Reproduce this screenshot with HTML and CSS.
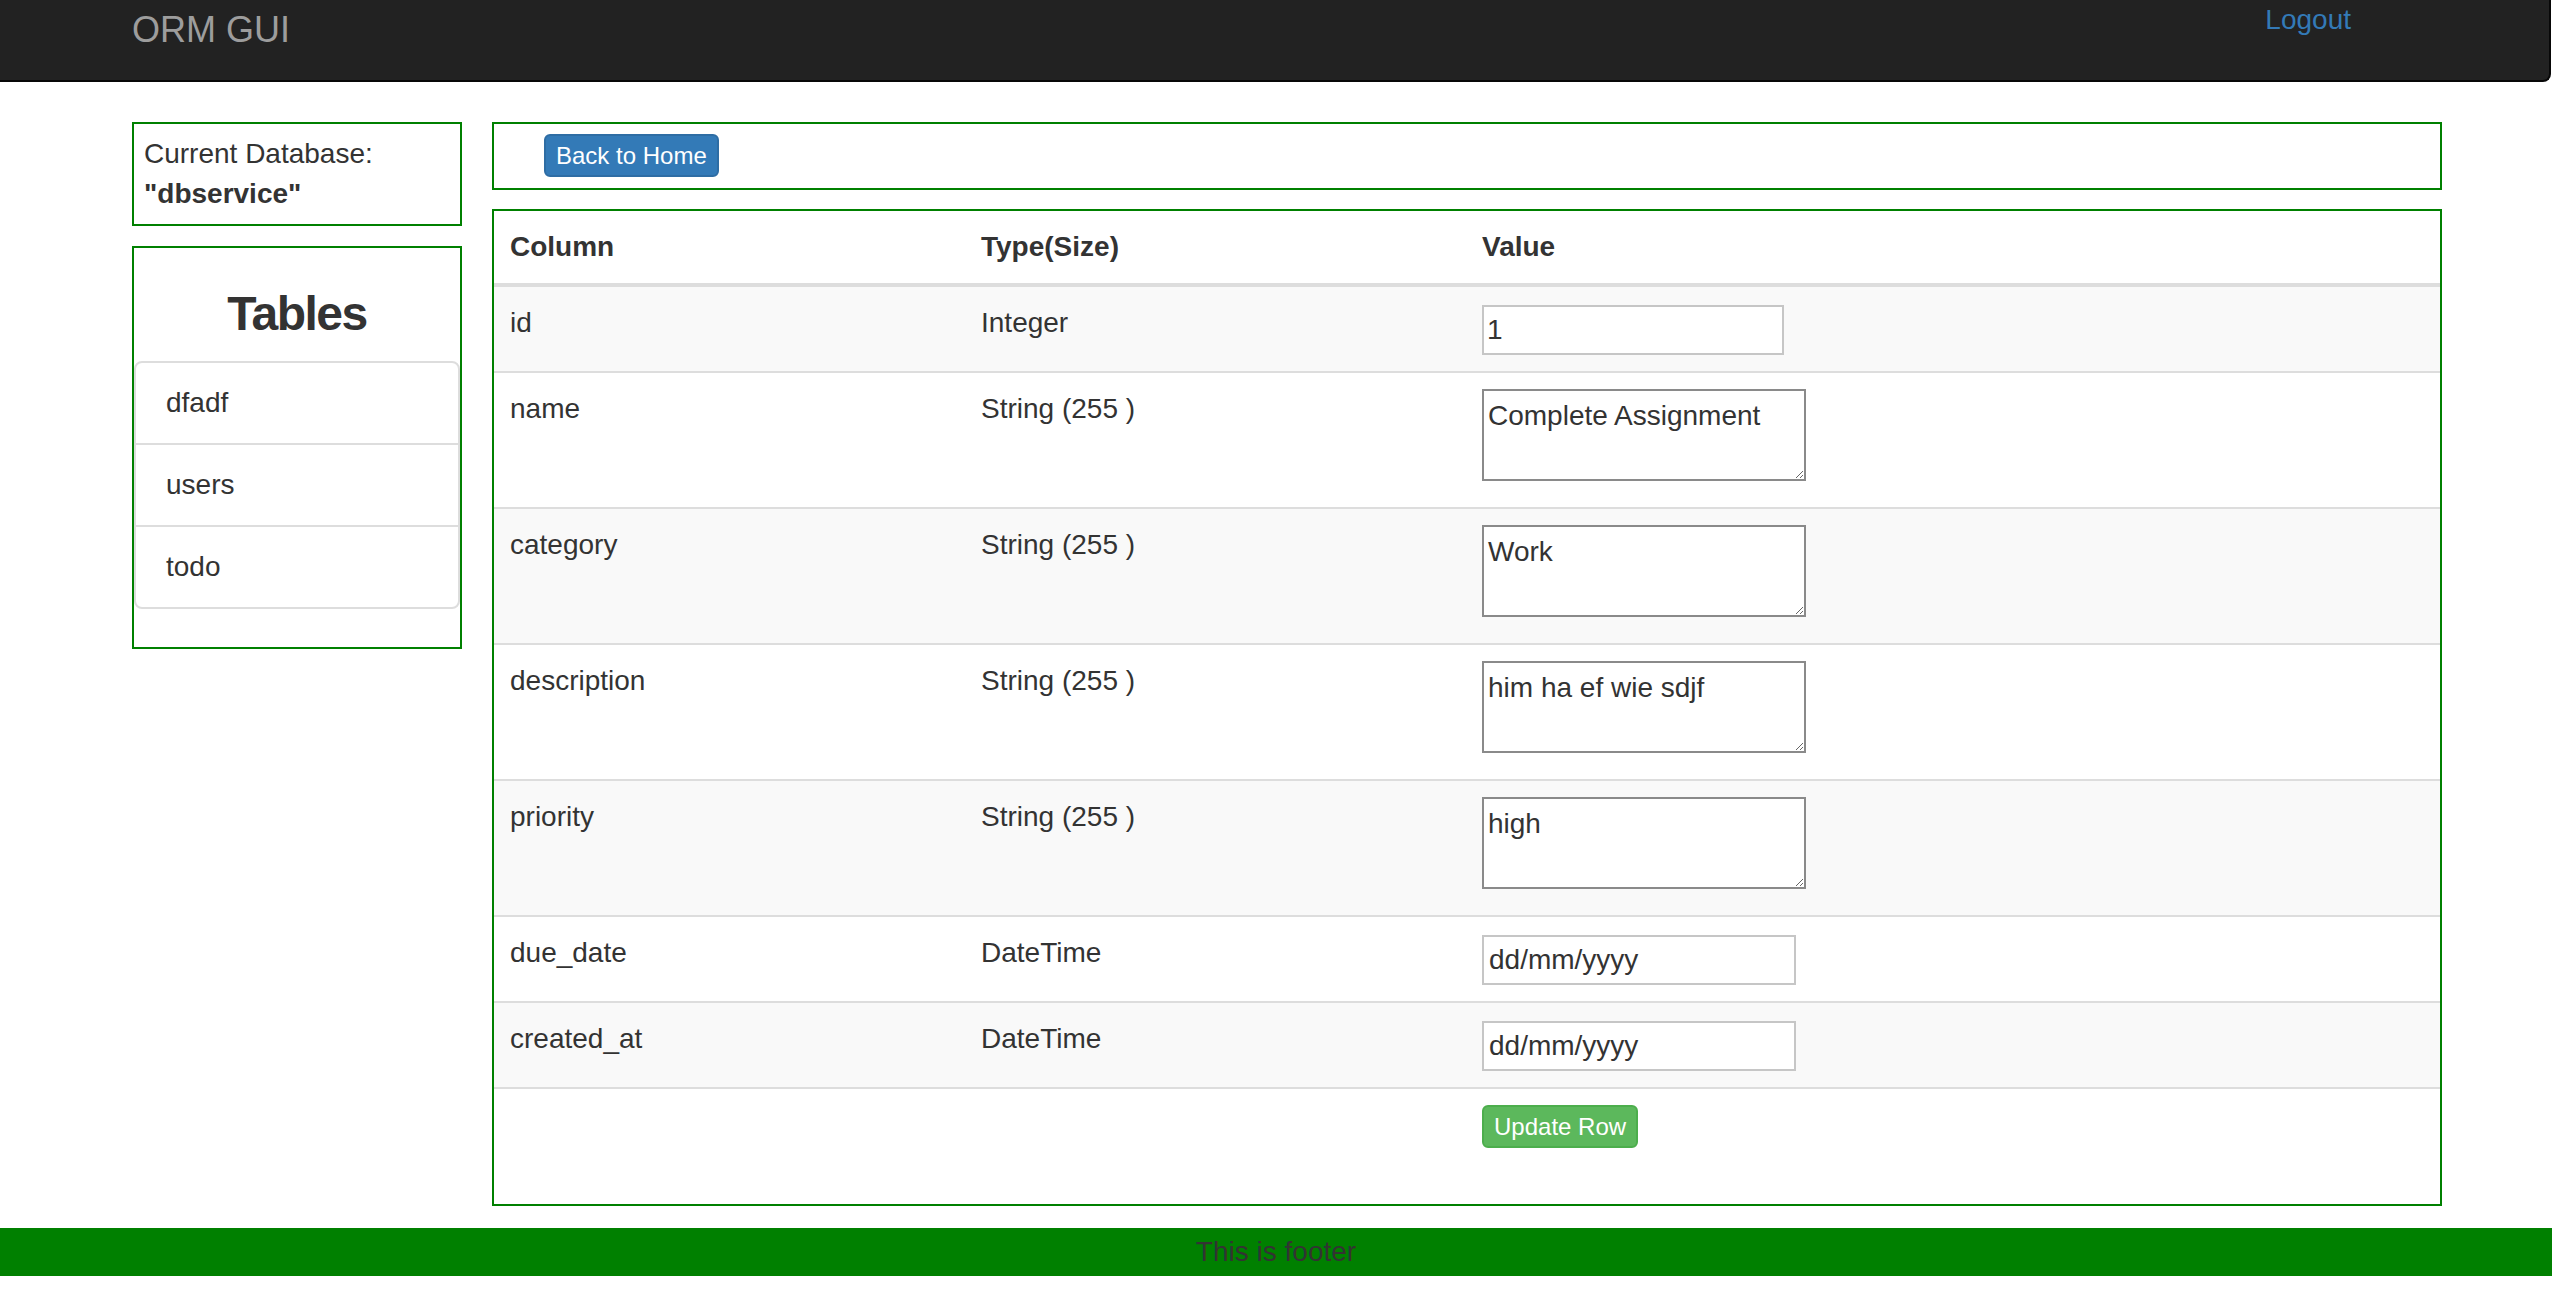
FILE: index.html
```html
<!DOCTYPE html>
<html lang="en">
<head>
<meta charset="utf-8">
<title>ORM GUI</title>
<link rel="stylesheet" href="styles.css">
</head>
<body>
<nav class="navbar">
  <a class="brand" href="#">ORM GUI</a>
  <a class="logout" href="#">Logout</a>
</nav>
<div class="main">
  <aside class="sidebar">
    <div class="db-box">
      <div>Current Database:</div>
      <div class="db-name">"dbservice"</div>
    </div>
    <div class="tables-box">
      <h3 class="tables-title">Tables</h3>
      <ul class="list-group">
        <li class="list-item">dfadf</li>
        <li class="list-item">users</li>
        <li class="list-item">todo</li>
      </ul>
    </div>
  </aside>
  <section class="content">
    <div class="toolbar">
      <button class="btn btn-primary" type="button">Back to Home</button>
    </div>
    <div class="table-box">
      <table class="data-table">
        <colgroup>
          <col class="col-name">
          <col class="col-type">
          <col>
        </colgroup>
        <thead>
          <tr><th>Column</th><th>Type(Size)</th><th>Value</th></tr>
        </thead>
        <tbody>
          <tr>
            <td>id</td><td>Integer</td>
            <td><input class="field" type="text" value="1"></td>
          </tr>
          <tr>
            <td>name</td><td>String (255 )</td>
            <td><textarea class="area" rows="2">Complete Assignment</textarea></td>
          </tr>
          <tr>
            <td>category</td><td>String (255 )</td>
            <td><textarea class="area" rows="2">Work</textarea></td>
          </tr>
          <tr>
            <td>description</td><td>String (255 )</td>
            <td><textarea class="area" rows="2">him ha ef wie sdjf</textarea></td>
          </tr>
          <tr>
            <td>priority</td><td>String (255 )</td>
            <td><textarea class="area" rows="2">high</textarea></td>
          </tr>
          <tr>
            <td>due_date</td><td>DateTime</td>
            <td><input class="field date" type="text" value="dd/mm/yyyy"></td>
          </tr>
          <tr>
            <td>created_at</td><td>DateTime</td>
            <td><input class="field date" type="text" value="dd/mm/yyyy"></td>
          </tr>
          <tr>
            <td></td><td></td>
            <td><button class="btn btn-success" type="button">Update Row</button></td>
          </tr>
        </tbody>
      </table>
    </div>
  </section>
</div>
<footer class="footer">This is footer</footer>
</body>
</html>
```

FILE: styles.css
```css
* {
  box-sizing: border-box;
}

body {
  margin: 0;
  font-family: "Liberation Sans", Arial, sans-serif;
  font-size: 28px;
  line-height: 40px;
  color: #333;
  background: #fff;
}

.navbar {
  display: flex;
  align-items: flex-start;
  height: 82px;
  margin-right: 1px;
  padding-left: 132px;
  background: #222;
  border-bottom: 2px solid #080808;
  border-right: 2px solid #080808;
  border-bottom-right-radius: 8px;
}

.brand {
  padding-top: 10px;
  font-size: 36px;
  line-height: 40px;
  color: #9d9d9d;
  text-decoration: none;
}

.logout {
  margin-left: auto;
  margin-right: 198px;
  color: #337ab7;
  text-decoration: none;
}

.main {
  display: flex;
  align-items: flex-start;
  gap: 30px;
  margin-top: 40px;
  padding-left: 132px;
}

.sidebar {
  flex: none;
  width: 330px;
  display: flex;
  flex-direction: column;
  gap: 20px;
}

.db-box {
  border: 2px solid #008000;
  padding: 10px;
}

.db-name {
  font-weight: bold;
}

.tables-box {
  border: 2px solid #008000;
}

.tables-title {
  margin: 40px 0 20px;
  font-size: 48px;
  line-height: 52.8px;
  font-weight: bold;
  letter-spacing: -1.5px;
  text-align: center;
}

.list-group {
  list-style: none;
  margin: 0 0 38px;
  padding: 0;
}

.list-item {
  padding: 20px 30px;
  margin-bottom: -2px;
  background: #fff;
  border: 2px solid #ddd;
}

.list-item:first-child {
  border-top-left-radius: 8px;
  border-top-right-radius: 8px;
}

.list-item:last-child {
  margin-bottom: 0;
  border-bottom-left-radius: 8px;
  border-bottom-right-radius: 8px;
}

.content {
  flex: none;
  width: 1950px;
  display: flex;
  flex-direction: column;
  gap: 19px;
}

.toolbar {
  display: flex;
  border: 2px solid #008000;
  padding: 10px 0 11px 50px;
}

.btn {
  display: inline-block;
  margin: 0;
  padding: 2px 10px;
  font-family: inherit;
  font-size: 24px;
  line-height: 35px;
  color: #fff;
  border: 2px solid transparent;
  border-radius: 6px;
  cursor: pointer;
}

.btn-primary {
  background: #337ab7;
  border-color: #2e6da4;
}

.btn-success {
  background: #5cb85c;
  border-color: #4cae4c;
}

.table-box {
  border: 2px solid #008000;
}

.data-table {
  width: 100%;
  margin-bottom: 40px;
  border-collapse: collapse;
  border-spacing: 0;
  table-layout: fixed;
}

.col-name {
  width: 471px;
}

.col-type {
  width: 501px;
}

.data-table th {
  padding: 16px;
  text-align: left;
  vertical-align: bottom;
  font-weight: bold;
  border-bottom: 4px solid #ddd;
}

.data-table td {
  padding: 16px;
  vertical-align: top;
  border-top: 2px solid #ddd;
}

.data-table tbody tr:nth-child(odd) {
  background: #f9f9f9;
}

.field {
  width: 302px;
  height: 50px;
  margin: 2px 0 0;
  padding: 0 3px;
  font-family: inherit;
  font-size: 28px;
  color: #333;
  background: #fff;
  border: 2px solid #c6c6c6;
  border-radius: 0;
  outline: none;
}

.field.date {
  width: 314px;
  padding: 0 5px;
}

.area {
  width: 324px;
  height: 92px;
  margin: 0 0 -1px;
  padding: 5px 4px 2px;
  font-family: inherit;
  font-size: 28px;
  line-height: 40px;
  color: #333;
  background: #fff;
  border: 2px solid #8a8a8a;
  border-radius: 0;
  vertical-align: baseline;
  outline: none;
}

.footer {
  margin-top: 22px;
  padding: 4px 0;
  text-align: center;
  color: #333;
  background: #008000;
}
```
